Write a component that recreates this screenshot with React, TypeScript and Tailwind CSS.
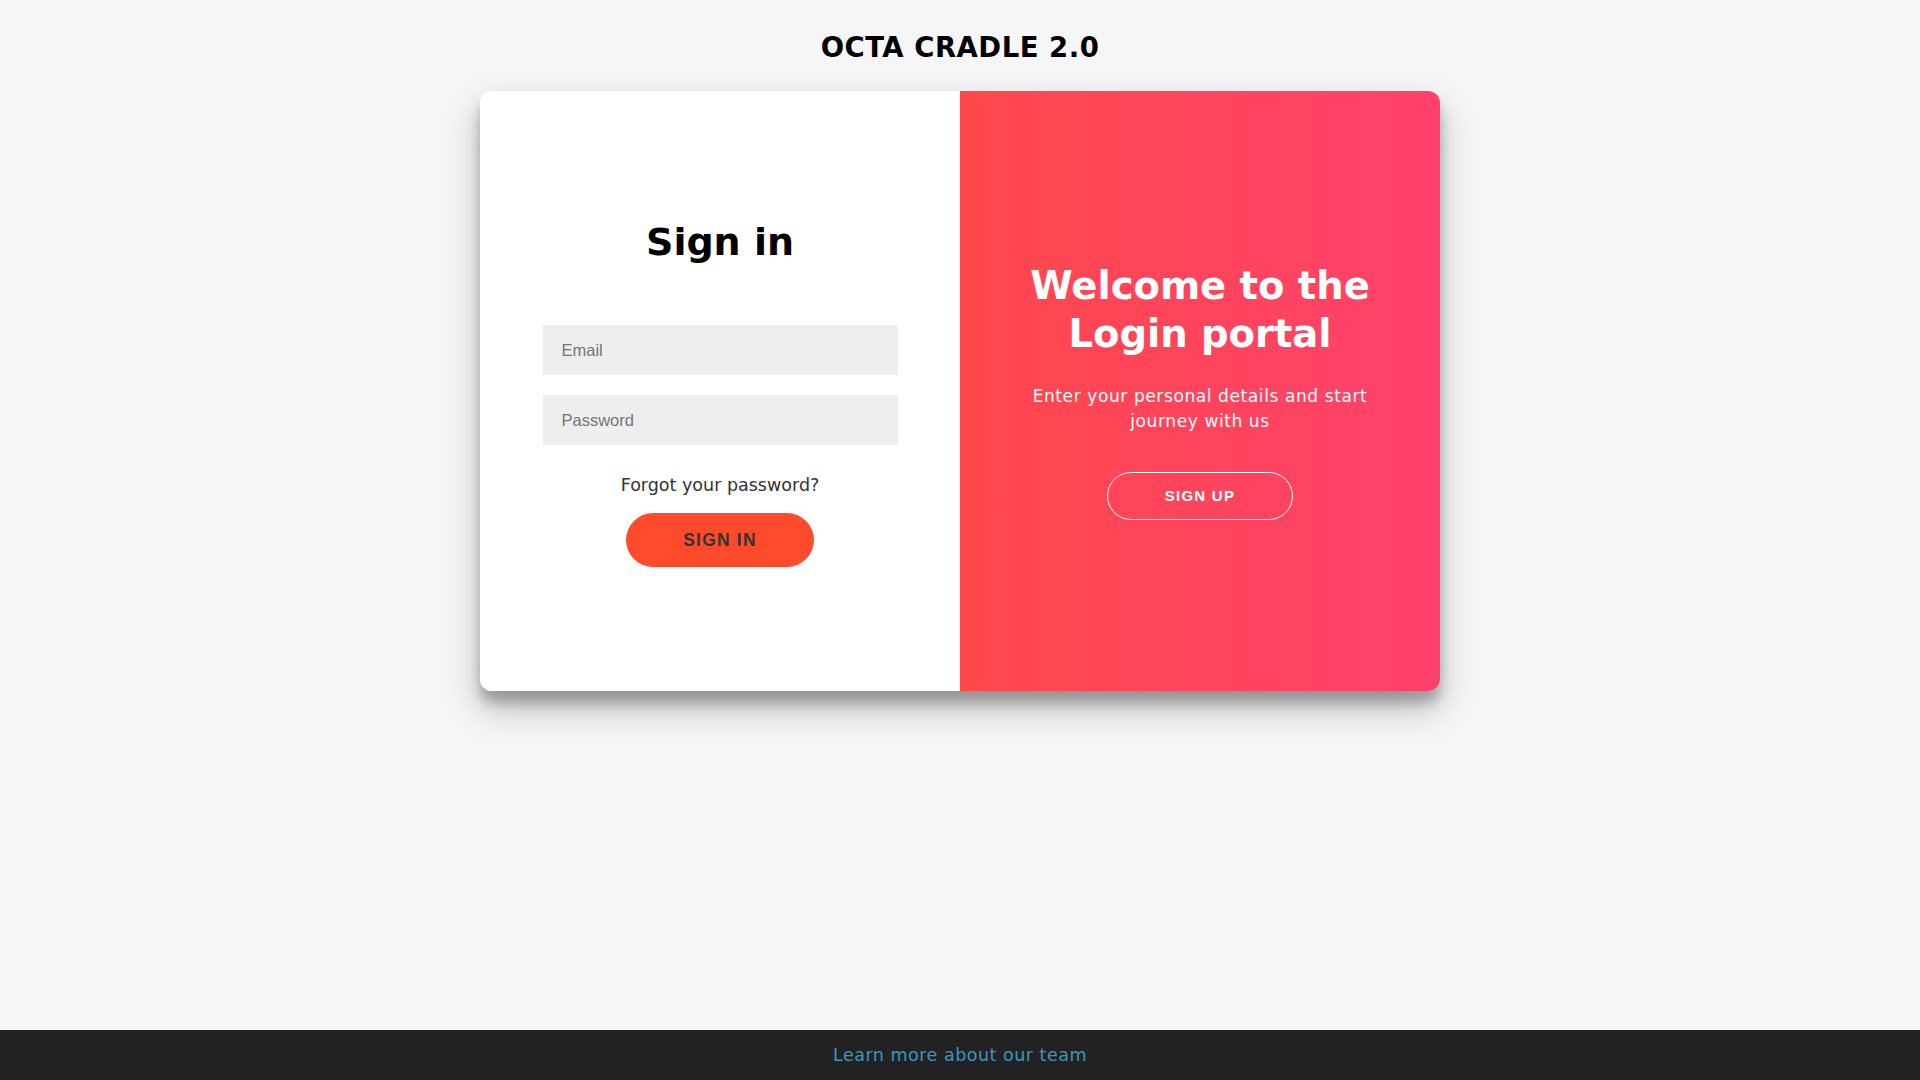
import React from 'react';

const SignInForm: React.FC = () => (
  <form
    onSubmit={(e) => e.preventDefault()}
    className="w-1/2 h-full bg-white flex flex-col items-center justify-center px-[62.5px] pt-[3px] text-center"
  >
    <h1 className="text-[38px] leading-[48px] font-bold text-black mb-[59px]">Sign in</h1>
    <input
      type="email"
      placeholder="Email"
      className="w-full h-[50px] bg-[#eee] px-[19px] text-[16.5px] font-['Liberation_Sans',Arial,sans-serif] placeholder:text-[#757575] outline-none"
    />
    <input
      type="password"
      placeholder="Password"
      className="w-full h-[50px] mt-[20px] bg-[#eee] px-[19px] text-[16.5px] font-['Liberation_Sans',Arial,sans-serif] placeholder:text-[#757575] outline-none"
    />
    <a href="#" className="mt-[28px] text-[17.5px] leading-[25px] text-[#333]">
      Forgot your password?
    </a>
    <button
      type="submit"
      className="mt-[15px] w-[188px] h-[54px] rounded-[27px] bg-[#ff4b2b] text-[#333] text-[17.5px] font-bold tracking-[1.2px] uppercase font-['Liberation_Sans',Arial,sans-serif]"
    >
      Sign In
    </button>
  </form>
);

const OverlayPanel: React.FC = () => (
  <div className="w-1/2 h-full bg-gradient-to-r from-[#ff474b] to-[#ff416c] flex flex-col items-center justify-center px-[50px] text-center text-white">
    <h1 className="text-[38.5px] leading-[48px] font-bold">Welcome to the Login portal</h1>
    <p className="mt-[26px] text-[17px] leading-[25px] tracking-[0.6px]">
      Enter your personal details and start journey with us
    </p>
    <button className="mt-[37.5px] w-[186px] h-[48px] rounded-[25px] border-[1.25px] border-white bg-transparent text-white text-[15px] font-bold tracking-[1.25px] uppercase font-['Liberation_Sans',Arial,sans-serif]">
      Sign Up
    </button>
  </div>
);

export default function App() {
  return (
    <div className="min-h-screen bg-[#f6f5f7] flex flex-col items-center font-['DejaVu_Sans',sans-serif]">
      <h2 className="mt-[30px] text-[27.5px] leading-[34px] font-bold tracking-[0.5px] text-black">
        OCTA CRADLE 2.0
      </h2>
      <div className="mt-[27px] w-[960px] h-[600px] rounded-[12px] overflow-hidden flex shadow-[0_17px_35px_rgba(0,0,0,0.25),0_12px_12px_rgba(0,0,0,0.22)]">
        <SignInForm />
        <OverlayPanel />
      </div>
      <footer className="fixed bottom-0 left-0 right-0 h-[50px] bg-[#222] flex items-center justify-center">
        <a href="#" className="text-[17.5px] tracking-[0.5px] text-[#3c97bf]">
          Learn more about our team
        </a>
      </footer>
    </div>
  );
}
